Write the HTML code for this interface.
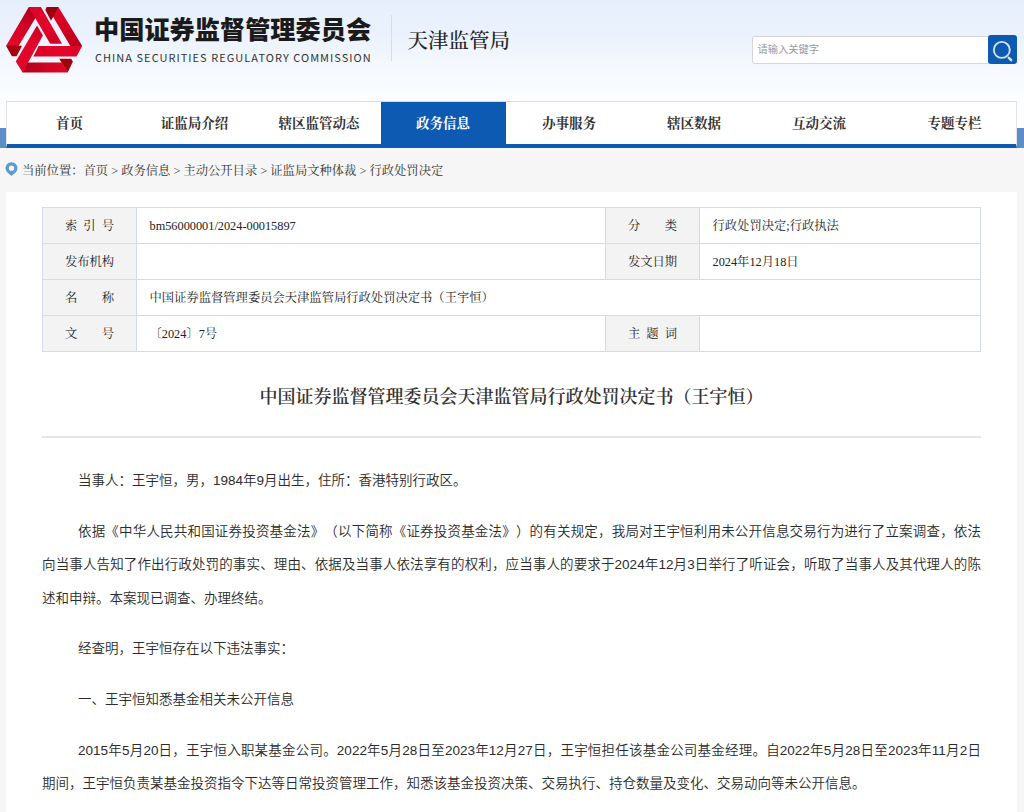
<!DOCTYPE html>
<html lang="zh-CN">
<head>
<meta charset="utf-8">
<title>中国证券监督管理委员会天津监管局行政处罚决定书（王宇恒）</title>
<style>
*{box-sizing:border-box;margin:0;padding:0}
html,body{width:1024px;height:812px;overflow:hidden}
body{background:#f6f6f6;font-family:"Liberation Serif","Noto Serif CJK SC",serif;color:#333;position:relative}
.hdr{position:absolute;left:0;top:0;width:1024px;height:148px;background:linear-gradient(180deg,#e5effb 0px,#ebf2fd 35px,#f5f9fe 70px,#fcfdff 101px,#fdfeff 148px)}
.logo{position:absolute;left:0;top:0}
.cn{position:absolute;left:94px;top:11.7px;font-family:"Liberation Sans","Noto Sans CJK SC",sans-serif;font-weight:900;font-size:25.2px;line-height:36px;color:#1a1a1a;white-space:nowrap;letter-spacing:0}
.en{position:absolute;left:95px;top:49.3px;font-family:"Noto Sans CJK SC","Liberation Sans",sans-serif;font-size:11px;line-height:16px;color:#333;white-space:nowrap;letter-spacing:1.03px}
.vline{position:absolute;left:391px;top:15px;width:1px;height:46px;background:#d9dde3}
.bureau{position:absolute;left:407.5px;top:26.3px;font-size:20.5px;line-height:30px;color:#222;font-weight:500;white-space:nowrap}
.sbox{position:absolute;left:752px;top:35.5px;width:237px;height:28.5px;background:#fff;border:1px solid #d6d6d6;border-radius:3px 0 0 3px;font-family:"Liberation Sans","Noto Sans CJK SC",sans-serif;font-size:10.25px;line-height:26.5px;color:#999;padding-left:4.5px}
.sbtn{position:absolute;left:988px;top:35px;width:29.100px;height:29px;background:#0c5ab2;border-radius:3px}
.stripeL{position:absolute;left:0;top:128px;width:7px;height:20px;background:#5b8ec6}
.stripeR{position:absolute;left:1017px;top:128px;width:7px;height:20px;background:#5b8ec6}
.nav{position:absolute;left:6px;top:101px;width:1011px;height:47px;background:#fff;border-top:1px solid #dcdcdc;border-left:1px solid #e3e3e3;border-right:1px solid #e3e3e3;border-bottom:4px solid #0c5ab2}
.nav span{position:absolute;top:0;height:42px;width:125px;text-align:center;font-weight:700;font-size:13.5px;line-height:43.2px;color:#333;white-space:nowrap}
.nav span.on{background:#0c5ab2;color:#fff}
.crumb{position:absolute;left:22px;top:162.2px;font-size:12.3px;line-height:18px;color:#333;white-space:nowrap}
.pin{position:absolute;left:5px;top:162px}
.main{position:absolute;left:6px;top:191.6px;width:1011px;height:640px;background:#fff}
table{position:absolute;left:36px;top:15.6px;width:939px;border-collapse:collapse;font-size:12.3px;color:#222}
td{border:1px solid #d3dce6;height:36px;padding:0 0 0 12.5px;vertical-align:middle;line-height:18px}
td.l{background:#f3f3f3;text-align:center;padding:0;width:94px}
td.l b{font-weight:400;display:inline-block;width:49.2px;text-align:justify;text-align-last:justify;white-space:nowrap;vertical-align:top}
h1{position:absolute;left:36px;top:190.1px;width:939px;text-align:center;font-size:18px;line-height:30px;font-weight:600;color:#333;letter-spacing:0;white-space:nowrap}
.rule{position:absolute;left:36px;top:244.5px;width:939px;height:1.5px;background:#e6e6e6}
.txt{position:absolute;left:36px;top:272.8px;width:939px;font-family:"Liberation Sans","Noto Sans CJK SC",sans-serif;font-size:13.5px;line-height:33.33px;color:#2b2b2b;font-weight:350;text-align:justify}
.txt{text-spacing-trim:space-all}
.txt p{margin-bottom:17.33px;white-space:nowrap}
.txt p i{font-style:normal;display:block;text-align:justify;text-align-last:justify;white-space:normal}
.txt p i.f,.txt p.f{padding-left:36px}
.txt p i.e{text-align-last:left;text-align:left}
</style>
</head>
<body>
<div class="hdr"></div>
<svg class="logo" width="90" height="80" viewBox="0 0 90 80">
<defs>
<linearGradient id="g1" gradientUnits="userSpaceOnUse" x1="31" y1="10" x2="12" y2="46"><stop offset="0" stop-color="#b2001b"/><stop offset="0.55" stop-color="#d80426"/><stop offset="1" stop-color="#e3062c"/></linearGradient>
<linearGradient id="g2" gradientUnits="userSpaceOnUse" x1="24" y1="68" x2="66" y2="68"><stop offset="0" stop-color="#b0001a"/><stop offset="0.6" stop-color="#d20424"/><stop offset="1" stop-color="#dc0628"/></linearGradient>
<linearGradient id="g3" gradientUnits="userSpaceOnUse" x1="58" y1="12" x2="78" y2="46"><stop offset="0" stop-color="#de0529"/><stop offset="0.5" stop-color="#cf0324"/><stop offset="1" stop-color="#b8001c"/></linearGradient>
<linearGradient id="g4" gradientUnits="userSpaceOnUse" x1="35" y1="8" x2="57" y2="44"><stop offset="0" stop-color="#e0042a"/><stop offset="0.6" stop-color="#e3052b"/><stop offset="1" stop-color="#cc0323"/></linearGradient>
<linearGradient id="g5" gradientUnits="userSpaceOnUse" x1="36" y1="51" x2="80" y2="51"><stop offset="0" stop-color="#d60426"/><stop offset="0.5" stop-color="#e3062b"/><stop offset="1" stop-color="#dd0529"/></linearGradient>
<linearGradient id="g6" gradientUnits="userSpaceOnUse" x1="40" y1="30" x2="19" y2="67"><stop offset="0" stop-color="#cf0324"/><stop offset="0.4" stop-color="#e2062b"/><stop offset="1" stop-color="#de0629"/></linearGradient>
</defs>
<polygon points="29.6,7 35.6,17.8 18.5,46 6,46 28.8,7" fill="url(#g1)"/>
<polygon points="6,45.8 22,45.8 16.7,56.2 11.9,56.2" fill="#a6000f"/>
<polygon points="58.4,7 82.2,46 70.3,46 53.2,17.1 52.6,16.6" fill="url(#g3)"/>
<polygon points="46.6,7 58.6,7 51,20.7 45.3,10.1" fill="#9c000c"/>
<polygon points="28.8,7 40.9,7 62,43.8 50.2,43.8" fill="url(#g4)"/>
<polygon points="38.7,46 82.2,46 76.5,56.4 33.4,56.4" fill="url(#g5)"/>
<polygon points="27.2,62.4 61.7,62.4 67.9,72.6 22.4,72.6" fill="url(#g2)"/>
<polygon points="37,25.6 42.9,35.5 22.6,72.6 15.8,61.4" fill="url(#g6)"/>
<polygon points="59.3,58.7 71.2,58.7 72.9,61.4 67.7,72.6 61.5,62.4" fill="#a3000e"/>
</svg>
<div class="cn">中国证券监督管理委员会</div>
<div class="en">CHINA SECURITIES REGULATORY COMMISSION</div>
<div class="vline"></div>
<div class="bureau">天津监管局</div>
<div class="sbox">请输入关键字</div>
<div class="sbtn"><svg width="29" height="29" viewBox="0 0 29 29"><circle cx="13.8" cy="14.9" r="8" fill="none" stroke="#d3e0f2" stroke-width="1.9"/><line x1="20.8" y1="22.9" x2="23.100" y2="25" stroke="#d3e0f2" stroke-width="2.600" stroke-linecap="round"/></svg></div>
<div class="stripeL"></div><div class="stripeR"></div>
<div class="nav">
<span style="left:0">首页</span>
<span style="left:125px">证监局介绍</span>
<span style="left:249.5px">辖区监管动态</span>
<span class="on" style="left:373.5px">政务信息</span>
<span style="left:499.5px">办事服务</span>
<span style="left:624.5px">辖区数据</span>
<span style="left:749.5px">互动交流</span>
<span style="left:885px">专题专栏</span>
</div>
<svg class="pin" width="13" height="16" viewBox="0 0 13 16"><path d="M2.7 10.8A6 6 0 1 1 10.3 10.8L7 13.5Q6.500 13.900 6 13.500Z" fill="#5f9bcb"/><circle cx="6.500" cy="6.200" r="2.600" fill="#f6f6f6"/></svg>
<div class="crumb">当前位置：首页 &gt; 政务信息 &gt; 主动公开目录 &gt; 证监局文种体裁 &gt; 行政处罚决定</div>
<div class="main">
<table>
<tr><td class="l"><b>索 引 号</b></td><td style="width:469px">bm56000001/2024-00015897</td><td class="l"><b>分 类</b></td><td>行政处罚决定;行政执法</td></tr>
<tr><td class="l"><b>发布机构</b></td><td></td><td class="l"><b>发文日期</b></td><td>2024年12月18日</td></tr>
<tr><td class="l"><b>名 称</b></td><td colspan="3">中国证券监督管理委员会天津监管局行政处罚决定书（王宇恒）</td></tr>
<tr><td class="l"><b>文 号</b></td><td>〔2024〕7号</td><td class="l"><b>主 题 词</b></td><td></td></tr>
</table>
<h1>中国证券监督管理委员会天津监管局行政处罚决定书（王宇恒）</h1>
<div class="rule"></div>
<div class="txt">
<p class="f">当事人：王宇恒，男，1984年9月出生，住所：香港特别行政区。</p>
<p><i class="f">依据《中华人民共和国证券投资基金法》（以下简称《证券投资基金法》）的有关规定，我局对王宇恒利用未公开信息交易行为进行了立案调查，依法</i><i>向当事人告知了作出行政处罚的事实、理由、依据及当事人依法享有的权利，应当事人的要求于2024年12月3日举行了听证会，听取了当事人及其代理人的陈</i><i class="e">述和申辩。本案现已调查、办理终结。</i></p>
<p class="f">经查明，王宇恒存在以下违法事实：</p>
<p class="f">一、王宇恒知悉基金相关未公开信息</p>
<p><i class="f">2015年5月20日，王宇恒入职某基金公司。2022年5月28日至2023年12月27日，王宇恒担任该基金公司基金经理。自2022年5月28日至2023年11月2日</i><i class="e">期间，王宇恒负责某基金投资指令下达等日常投资管理工作，知悉该基金投资决策、交易执行、持仓数量及变化、交易动向等未公开信息。</i></p>
<p class="f">二、王宇恒利用未公开信息从事相关证券交易活动的情况</p>
</div>
</div>
</body>
</html>
